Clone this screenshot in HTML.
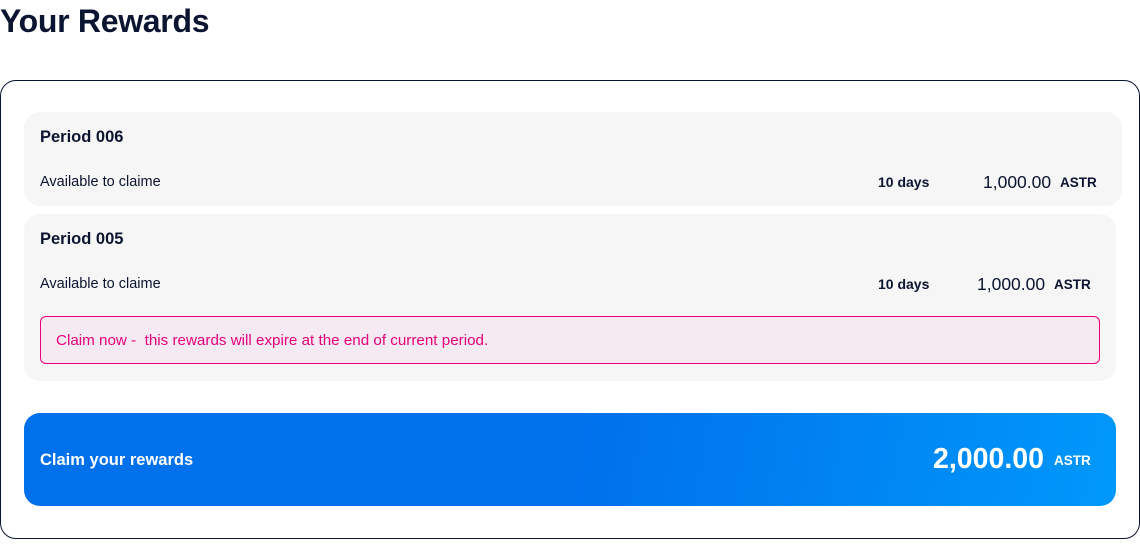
<!DOCTYPE html>
<html><head><style>
*{margin:0;padding:0;box-sizing:border-box}
body{width:1140px;height:547px;background:#fff;font-family:"Liberation Sans",sans-serif;color:#0b1430;position:relative;overflow:hidden}
h1{position:absolute;left:0;top:3px;font-size:32px;font-weight:700;letter-spacing:-0.3px;color:#0b1430}
.outer{position:absolute;left:0;top:80px;width:1140px;height:459px;border:1px solid #0b1430;border-radius:16px}
.card{position:absolute;background:#f6f6f6;border-radius:16px}
.t{position:absolute;font-size:16.5px;font-weight:700}
.s{position:absolute;font-size:14.5px}
.d{position:absolute;font-size:14px;font-weight:700}
.n{position:absolute;font-size:17.5px;font-weight:500}
.a{position:absolute;font-size:13.5px;font-weight:700}
.warn{position:absolute;left:40px;top:316px;width:1060px;height:48px;border:1px solid #e6007a;border-radius:6px;background:#f5eaf2;color:#e6007a;font-size:15.2px;padding:15px 0 0 15px}
.blue{position:absolute;left:24px;top:413px;width:1092px;height:93px;border-radius:16px;background:linear-gradient(100deg,#0070eb 0%,#0070eb 50%,#0098fb 100%);color:#fff}
</style></head><body>
<h1>Your Rewards</h1>
<div class="outer"></div>
<div class="card" style="left:24px;top:112px;width:1098px;height:94px"></div>
<div class="t" style="left:40px;top:128px">Period 006</div>
<div class="s" style="left:40px;top:174px">Available to claime</div>
<div class="d" style="left:878px;top:174px">10 days</div>
<div class="n" style="left:983px;top:172px">1,000.00</div>
<div class="a" style="left:1060px;top:175px">ASTR</div>
<div class="card" style="left:24px;top:214px;width:1092px;height:167px"></div>
<div class="t" style="left:40px;top:230px">Period 005</div>
<div class="s" style="left:40px;top:276px">Available to claime</div>
<div class="d" style="left:878px;top:276px">10 days</div>
<div class="n" style="left:977px;top:274px">1,000.00</div>
<div class="a" style="left:1054px;top:277px">ASTR</div>
<div class="warn">Claim now -&nbsp; this rewards will expire at the end of current period.</div>
<div class="blue">
<div class="t" style="left:16px;top:38px">Claim your rewards</div>
<div style="position:absolute;left:909px;top:30px;font-size:28.5px;font-weight:700">2,000.00</div>
<div class="a" style="left:1030px;top:40px">ASTR</div>
</div>
</body></html>
